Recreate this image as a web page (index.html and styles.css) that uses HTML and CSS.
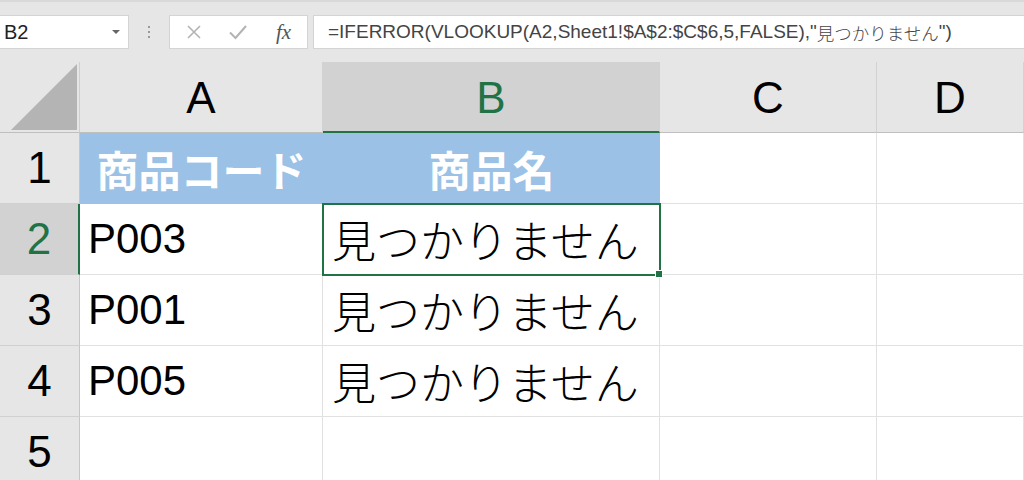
FILE: index.html
```html
<!DOCTYPE html>
<html>
<head>
  <meta charset="utf-8">
  <title>Book1 - Excel</title>
  <link rel="stylesheet" href="styles.css">
</head>
<body>
  <div class="toolbar">
    <div class="name-box">
      <span>B2</span>
      <span class="drop-arrow"></span>
    </div>
    <div class="grip">
      <span></span><span></span><span></span>
    </div>
    <div class="fx-buttons">
      <svg class="fx-icon" viewBox="0 0 16 16" width="16" height="16">
        <path d="M2,2L14,14M14,2L2,14" stroke="#b3b3b3" stroke-width="1.6" fill="none"/>
      </svg>
      <svg class="fx-icon" viewBox="0 0 18 16" width="18" height="16">
        <path d="M1,8.5L6.5,14L17,2" stroke="#b3b3b3" stroke-width="2" fill="none"/>
      </svg>
      <span class="fx-label">fx</span>
    </div>
    <div class="formula-box">=IFERROR(VLOOKUP(A2,Sheet1!$A$2:$C$6,5,FALSE),"<span class="jp">見つかりません</span>")</div>
  </div>

  <div class="sheet">
    <div class="corner"><span class="corner-tri"></span></div>
    <div class="col-head">A</div>
    <div class="col-head active">B</div>
    <div class="col-head">C</div>
    <div class="col-head">D</div>

    <div class="row-head">1</div>
    <div class="cell title">商品コード</div>
    <div class="cell title">商品名</div>
    <div class="cell"></div>
    <div class="cell"></div>

    <div class="row-head active">2</div>
    <div class="cell">P003</div>
    <div class="cell jp-text selected">見つかりません</div>
    <div class="cell"></div>
    <div class="cell"></div>

    <div class="row-head">3</div>
    <div class="cell">P001</div>
    <div class="cell jp-text">見つかりません</div>
    <div class="cell"></div>
    <div class="cell"></div>

    <div class="row-head">4</div>
    <div class="cell">P005</div>
    <div class="cell jp-text">見つかりません</div>
    <div class="cell"></div>
    <div class="cell"></div>

    <div class="row-head">5</div>
    <div class="cell"></div>
    <div class="cell"></div>
    <div class="cell"></div>
    <div class="cell"></div>
  </div>
</body>
</html>
```

FILE: styles.css
```css
body {
  margin: 0;
  width: 1024px;
  height: 480px;
  overflow: hidden;
  background: #e6e6e6;
  font-family: "Liberation Sans", "Noto Sans CJK JP", sans-serif;
  color: #000;
}
.toolbar {
  height: 62px;
  box-sizing: border-box;
  border-top: 2px solid #d9d9d9;
  padding-top: 13px;
  display: flex;
  align-items: flex-start;
}
.name-box {
  width: 129px;
  height: 34px;
  box-sizing: border-box;
  background: #fff;
  border: 1px solid #d4d4d4;
  border-left: none;
  display: flex;
  align-items: center;
  justify-content: space-between;
  padding: 0 8px 0 4px;
  font-size: 20px;
  color: #222;
}
.drop-arrow {
  width: 0;
  height: 0;
  border-left: 4px solid transparent;
  border-right: 4px solid transparent;
  border-top: 4px solid #666;
}
.grip {
  width: 40px;
  height: 34px;
  display: flex;
  flex-direction: column;
  align-items: center;
  justify-content: center;
  gap: 3px;
}
.grip span {
  width: 2px;
  height: 2px;
  background: #999;
}
.fx-buttons {
  width: 139px;
  height: 34px;
  box-sizing: border-box;
  background: #fff;
  border: 1px solid #d4d4d4;
  display: flex;
  align-items: center;
  padding-left: 16px;
  gap: 27px;
}
.fx-icon {
  display: block;
}
.fx-label {
  font-family: "Liberation Serif", serif;
  font-style: italic;
  font-size: 21px;
  color: #555;
  margin-left: 2px;
}
.formula-box {
  flex: 1;
  margin-left: 5px;
  height: 34px;
  box-sizing: border-box;
  background: #fff;
  border: 1px solid #d4d4d4;
  border-right: none;
  padding-left: 14px;
  display: flex;
  align-items: center;
  font-size: 19px;
  color: #444;
  white-space: nowrap;
  overflow: hidden;
}
.formula-box .jp {
  font-family: "Noto Sans CJK JP", sans-serif;
  font-size: 17.5px;
  font-weight: 300;
}

.sheet {
  display: grid;
  grid-template-columns: 80px 243px 337px 217px 1fr;
  grid-template-rows: 71px repeat(5, 71px);
  background: #fff;
}
.corner {
  background: #e6e6e6;
  border-bottom: 1px solid #bfbfbf;
  border-right: 1px solid #cfcfcf;
  position: relative;
}
.corner-tri {
  position: absolute;
  right: 2px;
  bottom: 2px;
  width: 0;
  height: 0;
  border-left: 66px solid transparent;
  border-bottom: 66px solid #b4b4b4;
}
.col-head {
  background: #e6e6e6;
  border-bottom: 1px solid #bfbfbf;
  border-right: 1px solid #d2d2d2;
  display: flex;
  align-items: center;
  justify-content: center;
  font-size: 44px;
  padding-top: 2px;
}
.col-head.active {
  background: #d2d2d2;
  color: #217346;
  border-bottom: 2px solid #217346;
}
.row-head {
  background: #e6e6e6;
  border-right: 1px solid #c6c6c6;
  border-bottom: 1px solid #d0d0d0;
  display: flex;
  align-items: center;
  justify-content: center;
  font-size: 44px;
}
.row-head.active {
  background: #d2d2d2;
  color: #217346;
  border-right: 2px solid #217346;
}
.cell {
  border-right: 1px solid #e1e1e1;
  border-bottom: 1px solid #e1e1e1;
  display: flex;
  align-items: center;
  padding-left: 8px;
  font-size: 42px;
  white-space: nowrap;
}
.cell.jp-text {
  font-size: 44px;
  font-weight: 300;
  padding-left: 9px;
}
.cell.title {
  background: #9bc2e6;
  color: #fff;
  font-weight: bold;
  justify-content: center;
  padding-left: 0;
  border-right: none;
  border-bottom-color: #9bc2e6;
}
.cell.selected {
  position: relative;
  outline: 2px solid #217346;
  outline-offset: -1px;
}
.cell.selected::after {
  content: "";
  position: absolute;
  right: -4px;
  bottom: -4px;
  width: 6px;
  height: 6px;
  background: #217346;
  border: 1px solid #fff;
  z-index: 2;
}
```
